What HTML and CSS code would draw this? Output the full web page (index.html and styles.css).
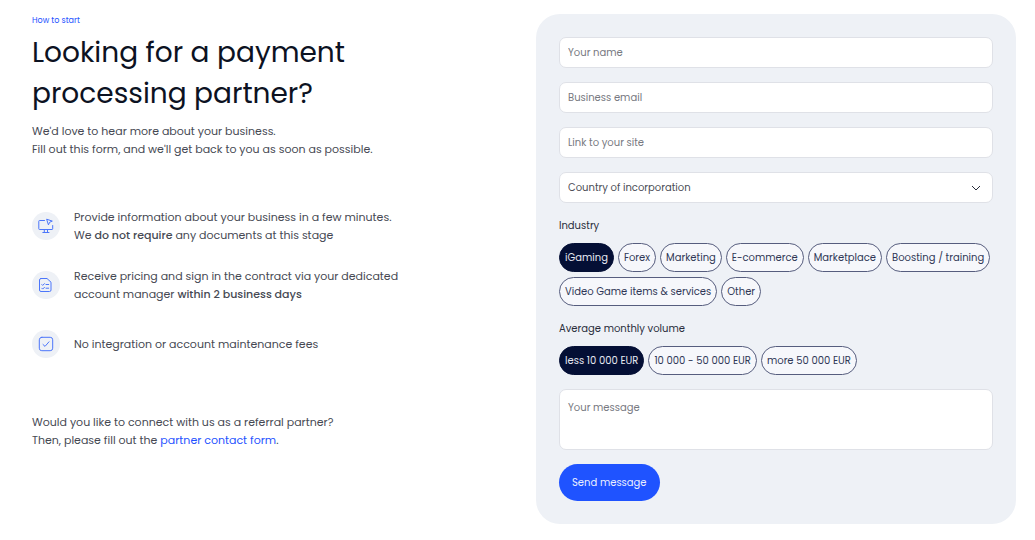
FILE: index.html
```html
<!DOCTYPE html>
<html lang="en">
<head>
<meta charset="utf-8">
<meta name="viewport" content="width=device-width, initial-scale=1">
<title>Looking for a payment processing partner?</title>
<link rel="stylesheet" href="styles.css">
</head>
<body>
<main class="contact">
  <section class="intro">
    <p class="eyebrow">How to start</p>
    <h1 class="title">Looking for a payment<br>processing partner?</h1>
    <p class="lead">We'd love to hear more about your business.<br>Fill out this form, and we'll get back to you as soon as possible.</p>
    <ul class="steps">
      <li class="step">
        <span class="step-icon">
          <svg viewBox="0 0 16 16" width="16" height="16" aria-hidden="true"><path d="M6.500 2.500H1.500Q.8 2.500 .8 3.200V10.800Q.8 11.500 1.500 11.500H14Q14.700 11.500 14.700 10.800V7.500M6.300 11.500V14.400M9.500 11.500V14.400M4.800 14.500H11M9 1.300L14.300 3.100L11.700 4.200L10.600 6.500Z"/></svg>
        </span>
        <p>Provide information about your business in a few minutes.<br>We <strong>do not require</strong> any documents at this stage</p>
      </li>
      <li class="step">
        <span class="step-icon">
          <svg viewBox="0 0 16 16" width="16" height="16" aria-hidden="true"><path d="M3 1.500H9L13 5.200V13Q13 14.500 11.500 14.500H3Q1.500 14.500 1.500 13V3Q1.500 1.500 3 1.500ZM3.800 7.500L4.700 8.400L6.500 6.600M8 7.500H10.700M3.800 11.200L4.700 12.100L6.500 10.300M8 11.200H10.700"/></svg>
        </span>
        <p>Receive pricing and sign in the contract via your dedicated<br>account manager <strong>within 2 business days</strong></p>
      </li>
      <li class="step">
        <span class="step-icon">
          <svg viewBox="0 0 16 16" width="16" height="16" aria-hidden="true"><rect x="1.300" y="1.300" width="13.400" height="13.400" rx="2.500"/><path d="M5 8.500L7 10.400L11 5.800"/></svg>
        </span>
        <p>No integration or account maintenance fees</p>
      </li>
    </ul>
    <p class="referral">Would you like to connect with us as a referral partner?<br>Then, please fill out the <a href="#partner">partner contact form</a>.</p>
  </section>

  <form class="panel">
    <div class="fields">
      <input class="field" type="text" name="name" placeholder="Your name" aria-label="Your name">
      <input class="field" type="email" name="email" placeholder="Business email" aria-label="Business email">
      <input class="field" type="url" name="site" placeholder="Link to your site" aria-label="Link to your site">
      <div class="select-wrap">
        <select class="field" name="country" aria-label="Country of incorporation"><option>Country of incorporation</option></select>
        <svg class="chevron" viewBox="0 0 10 6" width="10" height="6" aria-hidden="true"><path d="M1 1L5 5L9 1"/></svg>
      </div>
    </div>
    <fieldset class="group">
      <legend>Industry</legend>
      <div class="chips">
        <label class="chip"><input type="radio" name="industry" checked><span>iGaming</span></label>
        <label class="chip"><input type="radio" name="industry"><span>Forex</span></label>
        <label class="chip"><input type="radio" name="industry"><span>Marketing</span></label>
        <label class="chip"><input type="radio" name="industry"><span>E-commerce</span></label>
        <label class="chip"><input type="radio" name="industry"><span>Marketplace</span></label>
        <label class="chip"><input type="radio" name="industry"><span>Boosting / training</span></label>
        <label class="chip"><input type="radio" name="industry"><span>Video Game items &amp; services</span></label>
        <label class="chip"><input type="radio" name="industry"><span>Other</span></label>
      </div>
    </fieldset>
    <fieldset class="group">
      <legend>Average monthly volume</legend>
      <div class="chips">
        <label class="chip"><input type="radio" name="volume" checked><span>less 10 000 EUR</span></label>
        <label class="chip"><input type="radio" name="volume"><span>10 000 - 50 000 EUR</span></label>
        <label class="chip"><input type="radio" name="volume"><span>more 50 000 EUR</span></label>
      </div>
    </fieldset>
    <textarea class="field message" name="message" placeholder="Your message" aria-label="Your message"></textarea>
    <button class="send" type="submit">Send message</button>
  </form>
</main>
</body>
</html>
```
FILE: styles.css
```css
* {
  box-sizing: border-box;
}

body {
  margin: 0;
  background: #fff;
  color: #464953;
  font-family: Poppins, Inter, sans-serif;
  font-size: 11px;
  line-height: 18px;
}

p,
h1,
ul {
  margin: 0;
  padding: 0;
}

.contact {
  display: grid;
  grid-template-columns: 1fr 480px;
  gap: 24px;
  align-items: start;
  padding: 14px 19px 16px 32px;
}

.eyebrow {
  color: #1f53ff;
  font-size: 8px;
  line-height: 14px;
}

.title {
  margin-top: 4px;
  color: #0c1222;
  font-size: 28px;
  font-weight: 400;
  line-height: 41px;
}

.lead {
  margin-top: 8px;
}

.steps {
  display: grid;
  gap: 23px;
  margin-top: 50px;
  list-style: none;
}

.step {
  display: flex;
  align-items: center;
  gap: 14px;
  min-height: 36px;
}

.step strong {
  font-weight: 500;
}

.step-icon {
  display: grid;
  flex: none;
  place-items: center;
  width: 28px;
  height: 28px;
  border-radius: 50%;
  background: #eef1f6;
}

.step-icon svg {
  fill: none;
  stroke: #4c76fb;
  stroke-linecap: round;
  stroke-linejoin: round;
}

.referral {
  margin-top: 51px;
}

.referral a {
  color: #1f53ff;
  text-decoration: none;
}

.panel {
  padding: 23px;
  border-radius: 24px;
  background: #eef1f6;
}

.fields {
  display: grid;
  gap: 14px;
}

.field {
  display: block;
  width: 100%;
  height: 31px;
  margin: 0;
  padding: 0 8px;
  border: 1px solid #dfe1e7;
  border-radius: 7px;
  background: #fff;
  color: #4a4c55;
  font: inherit;
  font-size: 10px;
}

.field::placeholder {
  color: #777981;
  opacity: 1;
}

.select-wrap {
  display: grid;
  align-items: center;
}

.select-wrap > * {
  grid-area: 1 / 1;
}

.select-wrap .field {
  appearance: none;
}

.chevron {
  justify-self: end;
  margin-right: 12px;
  fill: none;
  stroke: #292d3b;
  pointer-events: none;
}

.group {
  min-width: 0;
  margin: 14px 0 0;
  padding: 0;
  border: 0;
}

.group legend {
  padding: 0;
  color: #292d3b;
  font-size: 10px;
  line-height: 18px;
}

.chips {
  display: flex;
  flex-wrap: wrap;
  gap: 5px 4px;
  padding-top: 8px;
}

.chip {
  display: grid;
}

.chip > * {
  grid-area: 1 / 1;
}

.chip input {
  margin: 0;
  opacity: 0;
}

.chip span {
  padding: 0 5px;
  border: 1px solid #565d7e;
  border-radius: 15px;
  background: #f6f7fb;
  color: #303756;
  font-size: 10px;
  line-height: 27px;
  white-space: nowrap;
  cursor: pointer;
}

.chip input:checked + span {
  border-color: #040f35;
  background: #040f35;
  color: #e6e9f2;
}

.chip input:focus-visible + span {
  outline: 2px solid #1f53ff;
}

.message {
  height: 61px;
  margin-top: 14px;
  padding: 9px 8px;
  resize: none;
}

.send {
  display: block;
  margin-top: 14px;
  padding: 0 13px;
  border: 0;
  border-radius: 19px;
  background: #1f53ff;
  color: #e9eeff;
  font: inherit;
  font-size: 10px;
  line-height: 37px;
}

@media (max-width: 800px) {
  .contact {
    grid-template-columns: 1fr;
    padding: 16px;
  }
}
```
